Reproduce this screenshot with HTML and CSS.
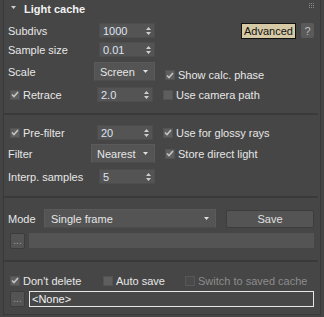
FILE: index.html
```html
<!DOCTYPE html>
<html>
<head>
<meta charset="utf-8">
<link rel="stylesheet" href="styles.css">
</head>
<body>
<div class="panel">
  <div class="head">
    <svg class="tri" width="5" height="3" viewBox="0 0 5 3"><path d="M0 0H5L2.5 3Z" fill="#cfcfcf"/></svg>
    <span class="title">Light cache</span>
    <svg class="grip" width="6" height="5" viewBox="0 0 6 5"><g fill="#8a8a8a"><rect x="0" y="0" width="1" height="1"/><rect x="2" y="0" width="1" height="1"/><rect x="4" y="0" width="1" height="1"/><rect x="0" y="2" width="1" height="1"/><rect x="2" y="2" width="1" height="1"/><rect x="4" y="2" width="1" height="1"/><rect x="0" y="4" width="1" height="1"/><rect x="2" y="4" width="1" height="1"/><rect x="4" y="4" width="1" height="1"/></g></svg>
  </div>

  <div class="row r1">
    <span class="lbl w91">Subdivs</span>
    <span class="spin">1000<svg class="arr" width="5" height="8" viewBox="0 0 5 8"><path d="M0 3H5L2.5 0Z M0 5H5L2.5 8Z" fill="#cfcfcf"/></svg></span>
    <span class="adv">Advanced</span>
    <span class="help">?</span>
  </div>
  <div class="row r2">
    <span class="lbl w91">Sample size</span>
    <span class="spin">0.01<svg class="arr" width="5" height="8" viewBox="0 0 5 8"><path d="M0 3H5L2.5 0Z M0 5H5L2.5 8Z" fill="#cfcfcf"/></svg></span>
  </div>
  <div class="row r3">
    <span class="lbl w86">Scale</span>
    <span class="drop w61">Screen<svg class="darr" width="5" height="3" viewBox="0 0 5 3"><path d="M0 0H5L2.5 3Z" fill="#e0e0e0"/></svg></span>
    <span class="chk right low"><span class="box on"><svg width="8" height="7" viewBox="0 0 8 7"><path d="M1 3.5L3 5.5L7 1" stroke="#c4c4c4" stroke-width="1.6" fill="none"/></svg></span>Show calc. phase</span>
  </div>
  <div class="row r4">
    <span class="chk w89"><span class="box on"><svg width="8" height="7" viewBox="0 0 8 7"><path d="M1 3.5L3 5.5L7 1" stroke="#c4c4c4" stroke-width="1.6" fill="none"/></svg></span>Retrace</span>
    <span class="spin">2.0<svg class="arr" width="5" height="8" viewBox="0 0 5 8"><path d="M0 3H5L2.5 0Z M0 5H5L2.5 8Z" fill="#cfcfcf"/></svg></span>
    <span class="chk right"><span class="box"></span>Use camera path</span>
  </div>

  <div class="sep s1"></div>

  <div class="row r5">
    <span class="chk w89"><span class="box on"><svg width="8" height="7" viewBox="0 0 8 7"><path d="M1 3.5L3 5.5L7 1" stroke="#c4c4c4" stroke-width="1.6" fill="none"/></svg></span>Pre-filter</span>
    <span class="spin">20<svg class="arr" width="5" height="8" viewBox="0 0 5 8"><path d="M0 3H5L2.5 0Z M0 5H5L2.5 8Z" fill="#cfcfcf"/></svg></span>
    <span class="chk right"><span class="box on"><svg width="8" height="7" viewBox="0 0 8 7"><path d="M1 3.5L3 5.5L7 1" stroke="#c4c4c4" stroke-width="1.6" fill="none"/></svg></span>Use for glossy rays</span>
  </div>
  <div class="row r6">
    <span class="lbl w83">Filter</span>
    <span class="drop w64">Nearest<svg class="darr" width="5" height="3" viewBox="0 0 5 3"><path d="M0 0H5L2.5 3Z" fill="#e0e0e0"/></svg></span>
    <span class="chk right"><span class="box on"><svg width="8" height="7" viewBox="0 0 8 7"><path d="M1 3.5L3 5.5L7 1" stroke="#c4c4c4" stroke-width="1.6" fill="none"/></svg></span>Store direct light</span>
  </div>
  <div class="row r7">
    <span class="lbl w91">Interp. samples</span>
    <span class="spin">5<svg class="arr" width="5" height="8" viewBox="0 0 5 8"><path d="M0 3H5L2.5 0Z M0 5H5L2.5 8Z" fill="#cfcfcf"/></svg></span>
  </div>

  <div class="sep s2"></div>

  <div class="row r8">
    <span class="lbl w36">Mode</span>
    <span class="drop wmode">Single frame<svg class="darr" width="5" height="3" viewBox="0 0 5 3"><path d="M0 0H5L2.5 3Z" fill="#e0e0e0"/></svg></span>
    <span class="btn save">Save</span>
  </div>
  <div class="row r9">
    <span class="dots">...</span>
    <span class="field"></span>
  </div>

  <div class="sep s3"></div>

  <div class="row r10">
    <span class="chk w93"><span class="box on"><svg width="8" height="7" viewBox="0 0 8 7"><path d="M1 3.5L3 5.5L7 1" stroke="#c4c4c4" stroke-width="1.6" fill="none"/></svg></span>Don't delete</span>
    <span class="chk w82"><span class="box"></span>Auto save</span>
    <span class="chk dis"><span class="box"></span>Switch to saved cache</span>
  </div>
  <div class="row r11">
    <span class="dots">...</span>
    <span class="field none">&lt;None&gt;</span>
  </div>
</div>
</body>
</html>
```

FILE: styles.css
```css
html, body {
  margin: 0;
  padding: 0;
  background: #444444;
}
body {
  font-family: "Liberation Sans", Arial, sans-serif;
  font-size: 11px;
  color: #e6e6e6;
  width: 324px;
  height: 317px;
  overflow: hidden;
}
.panel {
  box-sizing: border-box;
  margin-left: 3px;
  width: 318px;
  height: 315px;
  border: 1px solid #393939;
  border-top: none;
  padding: 0 6px 0 4px;
  background: #464646;
}
.head {
  height: 18px;
  display: flex;
  align-items: center;
}
.tri {
  margin-left: 3px;
  margin-top: -3px;
}
.title {
  font-weight: bold;
  font-size: 11px;
  color: #f2f2f2;
  margin-left: 8px;
}
.grip {
  margin-left: auto;
  margin-right: -1px;
  margin-top: -7px;
}
.row {
  display: flex;
  align-items: center;
}
.r1 { margin-top: 5px; height: 15px; }
.r2 { margin-top: 4px; height: 15px; }
.r3 { margin-top: 5px; height: 19px; }
.r4 { margin-top: 6px; height: 15px; }
.r5 { margin-top: 10px; height: 15px; }
.r6 { margin-top: 4px; height: 19px; }
.r7 { margin-top: 6px; height: 15px; }
.r8 { margin-top: 11px; height: 19px; }
.r9 { margin-top: 5px; height: 15px; }
.r10 { margin-top: 13px; height: 11px; }
.r11 { margin-top: 5px; height: 16px; }

.lbl { white-space: nowrap; }
.w91 { width: 91px; }
.w86 { width: 86px; }
.w83 { width: 83px; }
.w89 { width: 89px; }
.w36 { width: 36px; }
.w93 { width: 93px; }
.w82 { width: 82px; }

.spin {
  box-sizing: border-box;
  width: 56px;
  height: 15px;
  background: #545454;
  border: 1px solid #4d4d4d;
  color: #dfe3f2;
  padding-left: 3px;
  display: flex;
  align-items: center;
}
.arr {
  margin-left: auto;
  margin-right: 3px;
}
.drop {
  box-sizing: border-box;
  height: 19px;
  background: #545454;
  border: 1px solid #5a5a5a;
  border-bottom-color: #4c4c4c;
  display: flex;
  align-items: center;
  padding-left: 5px;
  color: #e6e6e6;
}
.w61 { width: 61px; }
.w64 { width: 64px; }
.wmode { width: 172px; padding-left: 6px; }
.darr {
  margin-left: auto;
  margin-right: 6px;
}
.adv {
  box-sizing: border-box;
  margin-left: auto;
  height: 16px;
  width: 55px;
  background: #d6c9a6;
  border: 1px solid #111111;
  color: #111111;
  display: flex;
  align-items: center;
  justify-content: center;
  font-size: 11px;
}
.help {
  box-sizing: border-box;
  margin-left: 5px;
  width: 13px;
  height: 15px;
  background: #5a5a5a;
  border-radius: 2px;
  color: #bdbdbd;
  display: flex;
  align-items: center;
  justify-content: center;
}
.chk {
  display: flex;
  align-items: center;
  white-space: nowrap;
  padding-left: 2px;
  box-sizing: border-box;
}
.chk.right { margin-left: 10px; padding-left: 0; }
.chk.low { align-self: flex-end; height: 12px; }
.box {
  box-sizing: border-box;
  width: 10px;
  height: 10px;
  background: #5e5e5e;
  border: 1px solid #535353;
  margin-right: 3px;
  display: flex;
  align-items: center;
  justify-content: center;
}
.box svg { display: block; }
.chk.dis { color: #8c8c8c; }
.chk.dis .box { background: #4a4a4a; border-color: #575757; }

.sep {
  height: 2px;
  background: #3a3a3a;
  margin-left: -4px;
  margin-right: -4px;
}
.s1 { margin-top: 11px; }
.s2 { margin-top: 12px; }
.s3 { margin-top: 12px; }

.btn {
  box-sizing: border-box;
  height: 18px;
  background: #545454;
  border: 1px solid #3d3d3d;
  border-radius: 2px;
  display: flex;
  align-items: center;
  justify-content: center;
  color: #e0e0e0;
}
.save { width: 88px; margin-left: 10px; }
.dots {
  box-sizing: border-box;
  margin-left: 2px;
  width: 16px;
  height: 16px;
  background: #545454;
  border: 1px solid #3d3d3d;
  border-radius: 2px;
  color: #a0a0a0;
  font-size: 10px;
  display: flex;
  align-items: center;
  justify-content: center;
  line-height: 1;
}
.field {
  box-sizing: border-box;
  margin-left: 4px;
  width: 285px;
  height: 15px;
  background: #545454;
  flex: none;
}
.field.none {
  height: 16px;
  background: #474747;
  border: 1px solid #e6e6e6;
  color: #f2f2f2;
  padding-left: 2px;
  display: flex;
  align-items: center;
}
```
